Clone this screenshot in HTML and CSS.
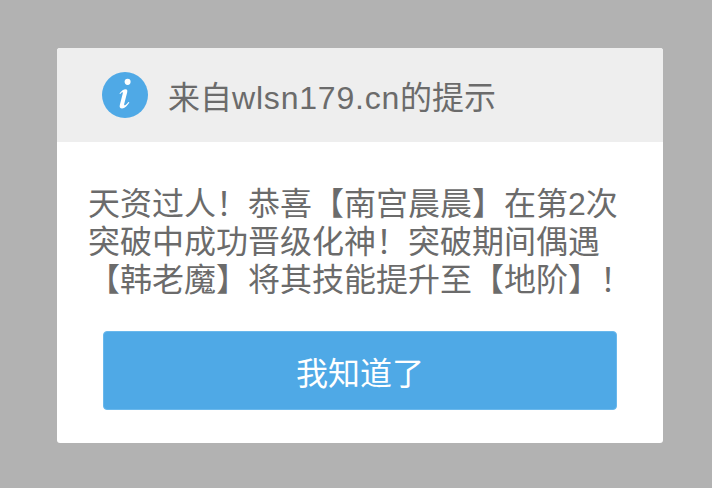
FILE: index.html
```html
<!DOCTYPE html>
<html lang="zh-CN">
<head>
  <meta charset="UTF-8">
  <meta name="viewport" content="width=device-width, initial-scale=1">
  <title>提示</title>
  <link rel="stylesheet" href="styles.css">
</head>
<body>
  <!-- Alert Dialog -->
  <div class="dialog">
    <div class="dialog-header">
      <svg class="info-icon" viewBox="0 0 46 46" width="46" height="46">
        <circle cx="23" cy="23" r="23" fill="#4fa9e6"/>
        <ellipse cx="25.6" cy="9.8" rx="3" ry="3.1" fill="#fff"/>
        <path d="M17.4 21.4c2.2-2.6 4.2-4.2 6.2-4.2 1.6 0 2 1.3 1.6 3l-3 11.8c-.3 1.2.4 1.6 1.3 1 1-.7 2-1.8 2.9-3.1l1 .7c-2.2 3.4-4.7 5.9-7.3 5.9-2.1 0-2.8-1.5-2.3-3.6l3-11.6c.3-1.1-.4-1.4-1.1-.8-.6.4-1.1 1-1.4 1.5z" fill="#fff"/>
      </svg>
      <span class="dialog-title">来自<span class="domain">wlsn179.cn</span>的提示</span>
    </div>
    <div class="dialog-body">
      <p class="message">天资过人！恭喜【南宫晨晨】在第2次<br>突破中成功晋级化神！突破期间偶遇<br>【韩老魔】将其技能提升至【地阶】！</p>
      <button class="confirm-btn">我知道了</button>
    </div>
  </div>
</body>
</html>
```

FILE: styles.css
```css
* {
  margin: 0;
  padding: 0;
  box-sizing: border-box;
}
html, body {
  height: 100%;
}
body {
  background: #b2b2b2;
  font-family: 'Liberation Sans', 'Noto Sans CJK SC', sans-serif;
  padding: 48px 49px 45px 57px;
  overflow: hidden;
}
.dialog {
  height: 395px;
  background: #fff;
  border-radius: 3px;
  overflow: hidden;
}
.dialog-header {
  height: 94px;
  background: #eeeeee;
  display: flex;
  align-items: center;
  gap: 20px;
  padding: 0 0 0 45px;
}
.info-icon {
  flex: none;
}
.dialog-title {
  font-size: 32px;
  color: #6b6b6b;
}
.domain {
  letter-spacing: 0.8px;
}
.dialog-body {
  padding: 43px 0 0 31px;
}
.message {
  font-size: 32px;
  line-height: 38px;
  color: #6b6b6b;
  white-space: nowrap;
}
.confirm-btn {
  display: block;
  width: 514px;
  height: 79px;
  margin: 32px 0 0 15px;
  background: #4fa9e6;
  border: 1px solid #6ab8ec;
  border-radius: 4px;
  color: #fff;
  font-family: inherit;
  font-size: 32px;
}
```
